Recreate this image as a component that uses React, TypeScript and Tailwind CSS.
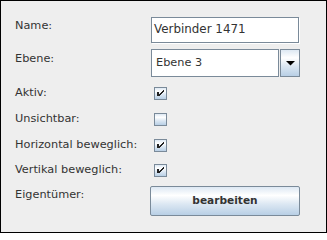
const ocean =
  "bg-[linear-gradient(to_bottom,#dde8f3_0%,#ffffff_30%,#dde8f3_60%,#b8cfe5_100%)]";

function CheckBox({ checked }: { checked: boolean }) {
  return (
    <div className={`w-[13px] h-[13px] border border-[#7a8a99] ${ocean}`}>
      {checked && (
        <svg width="11" height="11" viewBox="0 0 11 11" shapeRendering="crispEdges">
          <g fill="#222">
            <rect x="2" y="4" width="2" height="4" />
            <rect x="8" y="2" width="1" height="2" />
            <rect x="7" y="3" width="1" height="2" />
            <rect x="6" y="4" width="1" height="2" />
            <rect x="5" y="5" width="1" height="2" />
            <rect x="4" y="6" width="1" height="2" />
          </g>
        </svg>
      )}
    </div>
  );
}

function Label({ children, pt }: { children: string; pt: string }) {
  return (
    <div className={`w-[136px] shrink-0 text-[11.3px] leading-[14px] ${pt}`}>
      {children}
    </div>
  );
}

export default function App() {
  return (
    <div className="w-[327px] h-[233px] border border-black bg-[#eeeeee] pl-[14px] pt-[16px] font-['DejaVu_Sans',sans-serif] text-[#333333]">
      <div className="flex h-[26px]">
        <Label pt="pt-[2px]">Name:</Label>
        <div className="w-[148px] h-[26px] border border-[#7a8a99] bg-white shadow-[1px_1px_0_#ffffff] flex items-center pl-[2px] text-[11.9px]">
          Verbinder 1471
        </div>
      </div>

      <div className="flex h-[28px] mt-[6px]">
        <Label pt="pt-[3px]">Ebene:</Label>
        <div className="w-[128px] h-[28px] border border-[#7a8a99] bg-white flex items-center pl-[4px] text-[11.3px]">
          Ebene 3
        </div>
        <div className={`ml-[1px] w-[20px] h-[28px] border border-[#7a8a99] ${ocean} flex items-center justify-center`}>
          <svg width="9" height="5" viewBox="0 0 9 5">
            <polygon points="0,0 9,0 4.5,4.5" fill="#000" />
          </svg>
        </div>
      </div>

      <div className="flex h-[14px] mt-[9px]">
        <Label pt="pt-0">Aktiv:</Label>
        <div className="ml-[3px] mt-[1px]">
          <CheckBox checked />
        </div>
      </div>

      <div className="flex h-[14px] mt-[12px]">
        <Label pt="pt-0">Unsichtbar:</Label>
        <div className="ml-[3px] mt-[1px]">
          <CheckBox checked={false} />
        </div>
      </div>

      <div className="flex h-[14px] mt-[12px]">
        <Label pt="pt-0">Horizontal beweglich:</Label>
        <div className="ml-[3px] mt-[1px]">
          <CheckBox checked />
        </div>
      </div>

      <div className="flex h-[14px] mt-[11px]">
        <Label pt="pt-0">Vertikal beweglich:</Label>
        <div className="ml-[3px] mt-[1px]">
          <CheckBox checked />
        </div>
      </div>

      <div className="flex h-[30px] mt-[9px]">
        <Label pt="pt-[2px]">Eigentümer:</Label>
        <button
          className={`-ml-[1px] w-[150px] h-[30px] border border-[#7a8a99] rounded-[2px] ${ocean} font-bold text-[10.6px] text-[#333333]`}
        >
          bearbeiten
        </button>
      </div>
    </div>
  );
}
